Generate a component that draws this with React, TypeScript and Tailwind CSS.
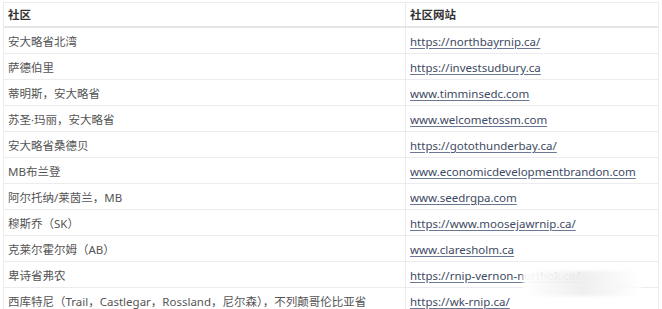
const rows = [
  { name: '安大略省北湾', site: 'https://northbayrnip.ca/' },
  { name: '萨德伯里', site: 'https://investsudbury.ca' },
  { name: '蒂明斯，安大略省', site: 'www.timminsedc.com' },
  { name: '苏圣·玛丽，安大略省', site: 'www.welcometossm.com' },
  { name: '安大略省桑德贝', site: 'https://gotothunderbay.ca/' },
  { name: 'MB布兰登', site: 'www.economicdevelopmentbrandon.com' },
  { name: '阿尔托纳/莱茵兰，MB', site: 'www.seedrgpa.com' },
  { name: '穆斯乔（SK）', site: 'https://www.moosejawrnip.ca/' },
  { name: '克莱尔霍尔姆（AB）', site: 'www.claresholm.ca' },
  { name: '卑诗省弗农', site: 'https://rnip-vernon-northok.ca/' },
  { name: '西库特尼（Trail，Castlegar，Rossland，尼尔森），不列颠哥伦比亚省', site: 'https://wk-rnip.ca/' },
]

export default function App() {
  return (
    <div
      className="relative h-[309px] w-[662px] overflow-hidden bg-white pl-[3px] pt-[2px] text-[11.5px]"
      style={{ fontFamily: '"Noto Sans", "Noto Sans CJK SC", sans-serif' }}
    >
      <div className="w-[656px] border-x border-t border-[#ececec]">
        {/* 表头 */}
        <div className="flex h-[25px] border-b-2 border-[#e6e6e6] font-bold text-[#333]">
          <div className="flex w-[402px] items-center border-r border-[#ececec] pl-[4px] pt-[1px]">社区</div>
          <div className="flex flex-1 items-center pl-[4px] pt-[1px]">社区网站</div>
        </div>

        {rows.map((r) => (
          <div key={r.site} className="flex h-[26px] border-b border-[#ececec] text-[#555]">
            <div className="flex w-[402px] items-center border-r border-[#ececec] pl-[4px] pt-[2px] whitespace-nowrap">
              {r.name}
            </div>
            <div className="flex flex-1 items-center pl-[4px] pt-[2px]">
              <a href="#" className="text-[#3d4a63] underline underline-offset-2 decoration-[#6b7894]">
                {r.site}
              </a>
            </div>
          </div>
        ))}
      </div>

      {/* 水印遮挡 */}
      <div className="absolute left-[523px] top-[271px] h-[25px] w-[118px] rounded-[3px] bg-gradient-to-r from-white/95 via-[#eeeeee]/95 to-white/80 blur-[1.5px]" />
    </div>
  )
}
